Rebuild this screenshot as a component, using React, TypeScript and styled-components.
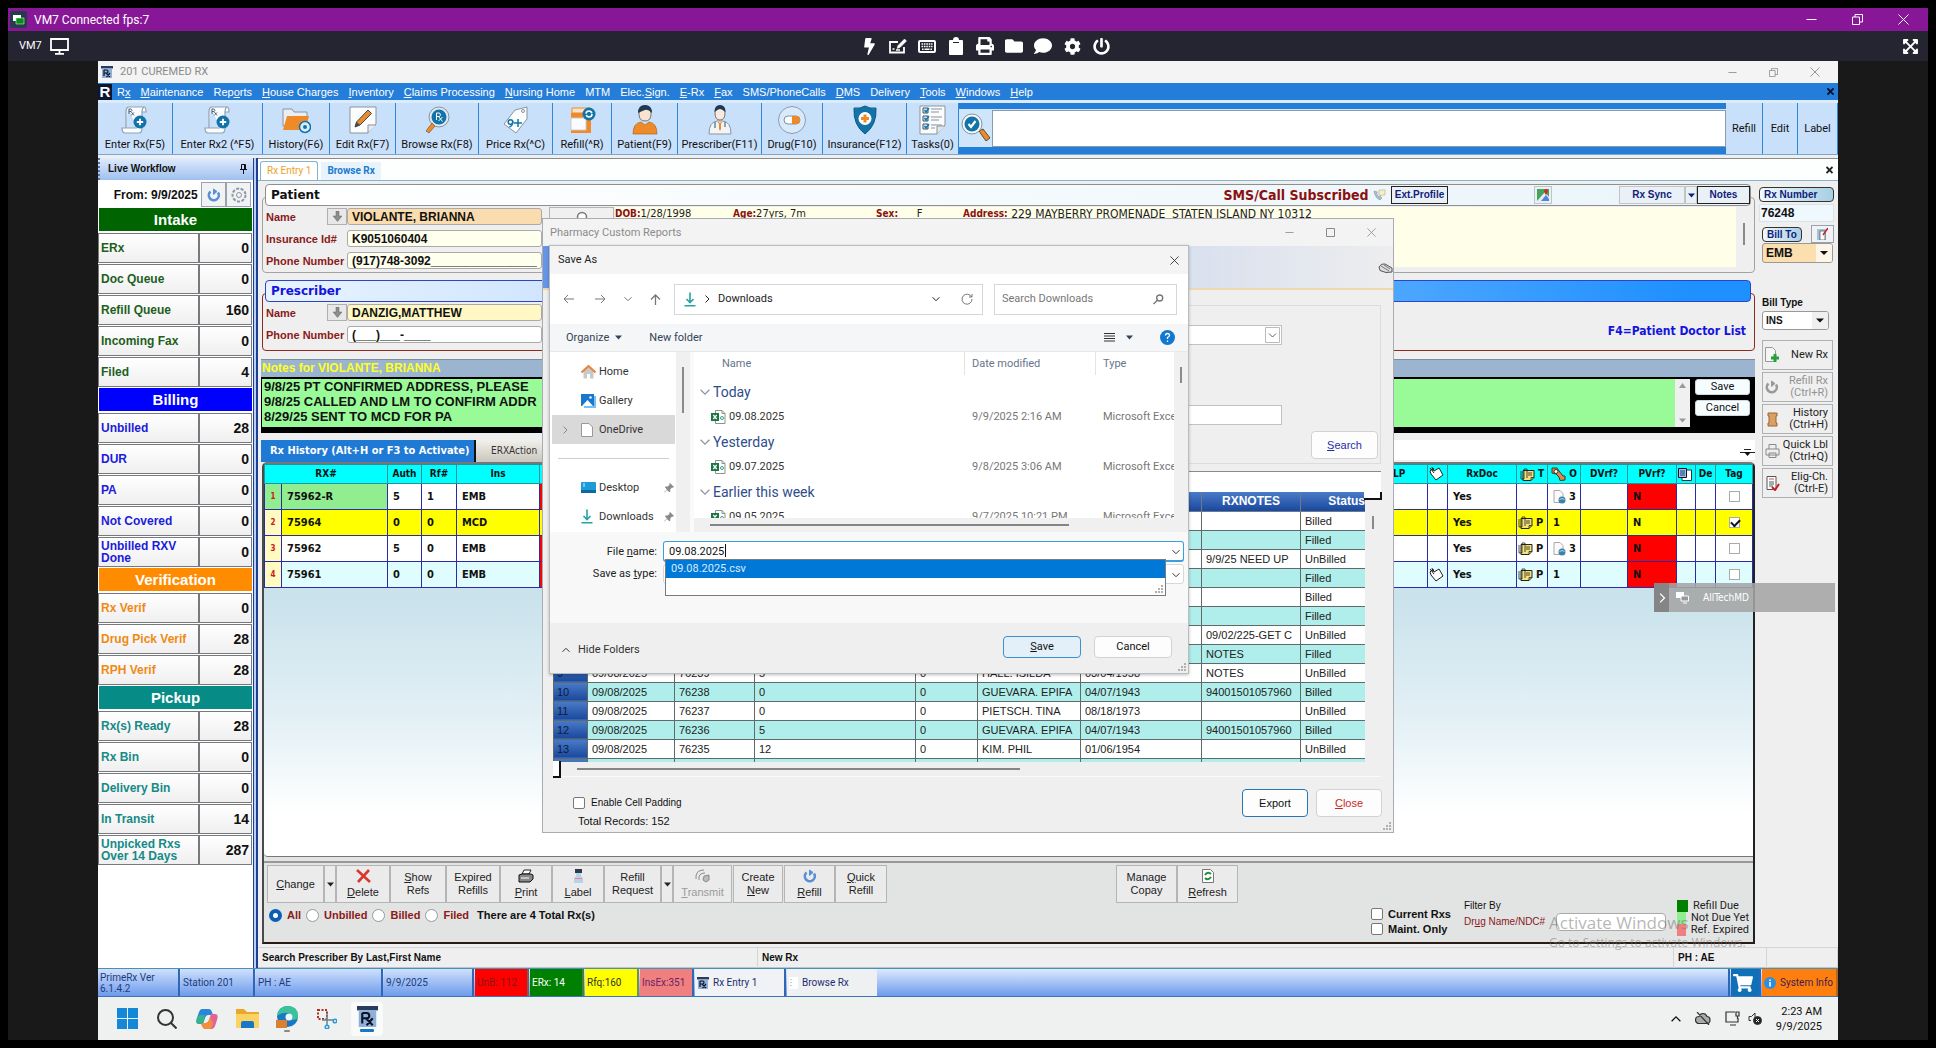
import React from "react";
import styled, { createGlobalStyle, css } from "styled-components";
import {
  FaBolt, FaPrint, FaFolder, FaComment, FaCog, FaPowerOff,
  FaExpandArrowsAlt, FaShoppingCart,
} from "react-icons/fa";

const ARIAL = '"Liberation Sans", Arial, sans-serif';
const UI = 'Roboto, "Segoe UI", sans-serif';
const TAHOMA = '"DejaVu Sans Condensed", "DejaVu Sans", Tahoma, sans-serif';
const VERDANA = '"DejaVu Sans", Verdana, sans-serif';

const Global = createGlobalStyle`
  * { box-sizing: border-box; }
  body { margin: 0; background: #000; font: 11px/14px ${ARIAL}; color: #111; }
  button, input, select, textarea { font: inherit; color: inherit; margin: 0; padding: 0; border-radius: 0; }
  svg { display: block; flex: none; }
  u { text-underline-offset: 1px; }
`;

/* "&" marks the access key of a label */
function Mn({ t }: { t: string }) {
  const i = t.indexOf("&");
  if (i < 0) return <>{t}</>;
  return <span>{t.slice(0, i)}<u>{t[i + 1]}</u>{t.slice(i + 2)}</span>;
}

/* ---------- viewer frame ---------- */
const Viewer = styled.div`min-height: 100vh; padding: 8px; display: flex; flex-direction: column; background: #000;`;
const ViewerTitle = styled.header`
  height: 23px; background: #871796; color: #fff; display: flex; align-items: center; gap: 7px; padding: 0 19px 0 2px;
  font: 12px/16px ${UI};
`;
const Spacer = styled.span`flex: 1;`;
const WinButtons = styled.div<{ $gap: number }>`display: flex; align-items: center; gap: ${p => p.$gap}px;`;
const IconBtn = styled.button`background: none; border: 0; display: flex; align-items: center; justify-content: center;`;
const ViewerBar = styled.div`
  height: 30px; background: #252532; color: #fff; display: grid; grid-template-columns: 1fr auto 1fr;
  align-items: center; padding: 0 9px 0 11px; font: 11px/14px ${UI};
`;
const BarSide = styled.div<{ $end?: boolean }>`display: flex; align-items: center; gap: 8px; justify-content: ${p => (p.$end ? "flex-end" : "flex-start")};`;
const BarTools = styled.div`display: flex; align-items: center; gap: 11px; padding-left: 32px; button { width: 18px; }`;
const Stage = styled.div`flex: 1; display: flex; padding: 0 90px; background: #191919;`;

/* ---------- desktop and application ---------- */
const Desktop = styled.div`position: relative; flex: 1; min-width: 0; display: flex; flex-direction: column; background: #efefef;`;
const AppTitle = styled.div`
  height: 22px; display: flex; align-items: center; gap: 7px; padding: 0 18px 0 3px; background: #f3f4f3; color: #8b8b8b;
  font: 11px/14px ${UI};
`;
const MenuBar = styled.nav`
  height: 20px; display: flex; align-items: center; gap: 10px; padding-right: 4px; background: #247dd8; color: #fff;
  border-bottom: 3px solid #dcebf8;
  a { color: inherit; text-decoration: none; }
  button { color: #06122a; }
`;
const Logo = styled.span`width: 14px; height: 16px; margin-right: -5px; background: #0b1633; color: #fff; font: bold 15px/16px ${ARIAL}; text-align: center;`;
const ToolBar = styled.div`height: 52px; display: flex; background: #247dd8; border-bottom: 1px solid #7aa7d0;`;
const BigTool = styled.button<{ $w: number }>`
  width: ${p => p.$w}px; border: 0; border-right: 1px solid #2f86dd; background: #c9e0fb; display: flex; flex-direction: column;
  align-items: center; justify-content: center; gap: 3px; font: 11px/14px ${UI}; white-space: nowrap; color: #111;
`;
const Finder = styled.div`
  flex: 1; display: flex; margin: 6px 0 7px; background: #cfe6fa; align-items: center; padding-left: 2px; gap: 1px;
  input { flex: 1; min-width: 0; height: 37px; border: 1px solid #8d9aa8; background: #fff; }
`;
const Work = styled.div`flex: 1; display: flex; margin-top: 3px; background: #fff;`;

/* ---------- workflow panel ---------- */
const Flow = styled.aside`width: 155px; background: #fff; font-weight: bold;`;
const FlowHead = styled.div`
  height: 22px; display: flex; align-items: center; justify-content: space-between; padding: 0 6px 0 8px;
  background: linear-gradient(#e0ebfc, #9fc0ef); font-size: 10px; border-left: 2px dotted #56719e;
`;
const FromRow = styled.div`height: 28px; display: flex; align-items: center; justify-content: flex-end; font-size: 12px; padding: 2px 2px 1px 0;`;
const SmallTool = styled.button`
  width: 25px; height: 25px; border: 1px solid #9aa3ad; background: #f0f2f4; display: flex; align-items: center; justify-content: center;
`;
const FlowTitle = styled.h2<{ $c: string }>`
  margin: 0 1px 2px; height: 23px; background: ${p => p.$c}; color: #fff; font: bold 15px/23px ${ARIAL}; text-align: center;
`;
const FlowList = styled.div`display: grid; gap: 1px; margin-bottom: 1px; padding-right: 1px;`;
const FlowRow = styled.button<{ $c: string }>`
  display: grid; grid-template-columns: 99px 1fr; height: 30px; border: 1px solid #77797c; background: linear-gradient(#fff, #efefef);
  align-items: center; font: bold 12px/12px ${ARIAL}; text-align: left; color: ${p => p.$c};
  span { padding-left: 2px; }
  b { height: 28px; border-left: 2px solid #77797c; color: #111; font-size: 14px; line-height: 28px; text-align: right; padding-right: 2px; }
`;
const Splitter = styled.div`width: 5px; background: #b9d0f4; border-left: 1px solid #1c3f94; border-right: 2px solid #1c3f94;`;

/* ---------- main document ---------- */
const Doc = styled.main`flex: 1; min-width: 0; display: flex; flex-direction: column; background: #efefef;`;
const DocTabs = styled.div`
  height: 23px; display: flex; align-items: flex-end; gap: 3px; padding: 0 5px 0 2px; background: #fdfefe;
  border-top: 1px solid #8a8a8a; border-bottom: 1px solid #86b3cc;
`;
const DocTab = styled.button<{ $on?: boolean }>`
  height: 18px; font: 10px/16px ${UI}; padding: 0 6px; border: 0; background: #e8f3fc; color: #1b7bd0; font-weight: bold;
  ${p => p.$on && css`height: 19px; background: #fff; border: 1px solid #86b3cc; border-bottom: 0; border-radius: 3px 3px 0 0; color: #f0a02a; font-weight: normal;`}
`;
const DocBody = styled.div`flex: 1; display: flex;`;
const Center = styled.div`flex: 1; min-width: 0; display: flex; flex-direction: column; padding: 3px 1px 3px 3px;`;
const GroupHead = styled.div<{ $blue?: boolean }>`
  position: relative; height: 22px; margin: 0 4px; display: flex; align-items: center; padding-left: 5px;
  border: 1px solid ${p => (p.$blue ? "#2a45c8" : "#8f8f8f")}; border-radius: 4px;
  background: ${p => (p.$blue ? "linear-gradient(90deg, #e8f3ff, #cfe5fe 20%, #1e90ff 96%)" : "linear-gradient(90deg, #fff, #eaf4fa)")};
  h2 { margin: 0; font: bold 12px/20px ${VERDANA}; color: ${p => (p.$blue ? "#1414dc" : "#111")}; }
`;
const GroupBody = styled.div<{ $red?: boolean }>`
  margin: -9px 0 7px 1px; padding: 9px 18px 0 3px; display: flex; height: ${p => (p.$red ? 58 : 76)}px;
  border: 1px solid ${p => (p.$red ? "#8a2b22" : "#a3a3a3")}; border-radius: 4px;
`;
const Alert = styled.span`font: bold 14px/18px ${TAHOMA}; color: #8b1010;`;
const HeadBtn = styled.button<{ $w: number; $ml?: number; $dark?: boolean }>`
  width: ${p => p.$w}px; margin-left: ${p => p.$ml || 0}px; height: 18px; border: 1px solid ${p => (p.$dark ? "#222" : "#c4c4c4")};
  background: #e9f0f6; color: #11207a; font: bold 10px/14px ${ARIAL}; display: flex; align-items: center; justify-content: center;
`;
const Fields = styled.div`display: grid; grid-template-columns: 61px 20px 195px; grid-auto-rows: 17px; row-gap: 5px; padding-top: 1px; align-content: start; align-items: center;
  label { grid-column: 1 / 3; color: #8b1a1a; font-weight: bold; white-space: nowrap; }
  label.short { grid-column: 1; }
`;
const Drop = styled.button`width: 20px; height: 17px; border: 1px solid #b0b0b0; background: #e8e8e8; display: flex; align-items: center; justify-content: center;`;
const Field = styled.input<{ $bg: string }>`
  height: 17px; width: 100%; min-width: 0; padding: 0 4px; border: 1px solid #aaa; border-radius: 3px; background: ${p => p.$bg}; font: bold 12px/15px ${ARIAL};
`;
const LookBtn = styled.button`width: 65px; height: 24px; margin: 0 1px 0 7px; border: 1px solid #b5b5b5; background: #f0f0f0; display: flex; justify-content: center; padding-top: 3px;`;
const Info = styled.div`
  flex: 1; height: 60px; background: #ffffe9; font: 11px/14px ${TAHOMA}; color: #222;
  dl { margin: 0; display: grid; grid-template-columns: 118px 143px 87px auto; white-space: pre; }
  dl div { display: flex; }
  dl div:last-child dd { font-size: 12px; }
  dt { font-weight: bold; font-size: 10px; color: #8b1010; } dd { margin: 0; }
`;
const InfoScroll = styled.div`width: 15px; margin-right: -15px; padding: 16px 0 0 7px;`;
const Thumb = styled.i<{ $h: number }>`display: block; width: 2px; height: ${p => p.$h}px; background: #8a8a8a; flex: none;`;
const F4 = styled.div`flex: 1; text-align: right; align-self: center; margin: 8px -10px 0 0; font: bold 12px/16px ${TAHOMA}; color: #1414dc;`;

const NotesBar = styled.div`height: 18px; margin-top: 1px; background: #9bb5d1; border-top: 1px solid #7d8c9b; color: #ffff1e; font: bold 12px/16px ${ARIAL}; padding-left: 1px;`;
const NotesBox = styled.div`height: 56px; background: #000; padding: 2px 5px 6px 1px; display: flex;
  textarea { flex: 1; min-width: 0; border: 0; resize: none; overflow: hidden; background: #98fb98; padding: 0 2px; font: bold 13px/15px ${ARIAL}; color: #111; }
`;
const NotesScroll = styled.div`width: 15px; background: #f0f0f0; display: flex; flex-direction: column; justify-content: space-between; align-items: center; padding: 4px 0;`;
const NotesButtons = styled.div`display: grid; gap: 5px; align-content: start; padding-left: 5px;
  button { width: 55px; height: 16px; border: 1px solid #cfd8dc; border-radius: 3px; background: #f6fdff; font: 11px/14px ${UI}; }
`;
const GridTabs = styled.div`height: 22px; margin-top: 7px; display: flex; background: linear-gradient(#fff 90%, #efefef 90%); align-items: stretch;`;
const GridTab = styled.button<{ $on?: boolean }>`
  border: 0; text-align: left; white-space: nowrap; padding: 0 0 0 15px; width: 90px; background: linear-gradient(#f2f0ea, #c9c6bf); font: 10px/20px ${TAHOMA}; color: #333;
  ${p => p.$on && css`width: 215px; padding: 0 0 0 9px; background: #1f7ad6; color: #fff; font: bold 11px/20px ${TAHOMA}; border-right: 2px solid #111;`}
`;
const GridBox = styled.div`
  flex: 1; display: flex; flex-direction: column; margin-left: 1px; border: 2px solid #4a4a4a; border-top-color: #777; border-radius: 5px 5px 0 0;
  background: #e2e3e3; border-right-color: #222; border-bottom-color: #2a1c16;
`;
const GridArea = styled.div`flex: 1; background: linear-gradient(#c9e2ec 130px, #e4f1f6 260px, #fff 350px); border-bottom: 1px solid #777; border-radius: 0 0 0 4px;`;
const RxTable = styled.table`
  width: 100%; table-layout: fixed; border-collapse: collapse; font: bold 11px/14px ${TAHOMA};
  th { height: 19px; padding: 0; background: #00ffff; border: 1px solid #2d8f98; font-size: 10px; overflow: hidden; white-space: nowrap; }
  td { height: 26px; padding: 0 0 0 5px; border: 1px solid #2b2ba8; overflow: hidden; white-space: nowrap; }
  th svg, td svg { display: inline-block; vertical-align: middle; margin-right: 3px; }
  th.lp { text-align: left; padding-left: 7px; }
  td.ico { padding-left: 1px; }
  td.tag { text-align: center; padding: 0; }
  input { appearance: none; width: 11px; height: 11px; border: 1px solid #aaa; background: #fff; vertical-align: middle; }
  input:checked::before { content: ""; display: block; width: 7px; height: 4px; margin: 1px; border: solid #111; border-width: 0 0 2px 2px; transform: rotate(-45deg); }
`;
const RxRow = styled.tr<{ $bg: string; $no: string; $rx?: string; $flag: string }>`
  background: ${p => p.$bg};
  td.no { background: ${p => p.$no}; color: #d01818; font-size: 8px; text-align: center; padding: 0; }
  td.rx { background: ${p => p.$rx || "transparent"}; }
  td.mid { background: ${p => p.$flag}; }
  td.pv { background: ${p => p.$flag}; }
`;
const Actions = styled.div`display: flex; margin-top: 4px; padding: 2px 3px 0 3px; border-top: 2px solid #999;`;
const Act = styled.button<{ $w: number; $ml?: number; $off?: boolean }>`
  width: ${p => p.$w}px; margin-left: ${p => p.$ml || 0}px; height: 38px; border: 1px solid #b5b5b5; background: #ebebeb; color: ${p => (p.$off ? "#9a9a9a" : "#222")};
  display: flex; flex-direction: column; align-items: center; justify-content: center; gap: 3px; font: 11px/13px ${ARIAL}; white-space: pre-line;
`;
const Filters = styled.div`height: 39px; display: flex; align-items: flex-start; padding: 0 4px 0 5px;`;
const Radios = styled.div`display: flex; gap: 5px; align-items: center; height: 24px; font-weight: bold; color: #8b1a1a; white-space: nowrap;
  label { display: flex; align-items: center; gap: 5px; }
  input { appearance: none; width: 13px; height: 13px; border: 1px solid #999; border-radius: 50%; background: #fff; }
  input:checked { border: 4px solid #0a5fb4; }
  strong { color: #111; padding-left: 3px; }
`;
const Checks = styled.div`display: grid; gap: 2px; padding-top: 4px; font-weight: bold; white-space: nowrap;
  label { display: flex; align-items: center; gap: 5px; height: 13px; }
`;
const Tick = styled.input`appearance: none; width: 12px; height: 12px; border: 1px solid #777; border-radius: 2px; background: #fff; flex: none;`;
const DrugFilter = styled.div`width: 202px; margin: -4px 11px 0 13px; font: 10px/14px ${ARIAL}; white-space: nowrap;
  div { display: flex; align-items: center; gap: 11px; color: #8b1a1a; }
  input { width: 110px; height: 18px; border: 1px solid #aaa; border-radius: 4px; background: #fff; }
`;
const Legend = styled.div`margin-top: -3px; font: 11px/12px ${UI}; color: #222; white-space: nowrap; width: 72px;
  div { display: flex; gap: 5px; }
  i { width: 11px; height: 12px; }
`;
const HintBar = styled.div`
  height: 21px; display: grid; grid-template-columns: 500px 1fr 93px 71px; border-top: 1px solid #d5d5d5; border-bottom: 1px solid #b9c6cc; font: bold 10px/20px ${ARIAL};
  span { padding-left: 4px; border-right: 1px solid #d5d5d5; white-space: nowrap; }
`;

/* ---------- right rail ---------- */
const Rail = styled.aside`width: 82px; padding: 6px 4px 0 3px; display: flex; flex-direction: column;
  > label, > span { font-weight: bold; font-size: 10px; }
`;
const Pill = styled.label`height: 15px; padding: 0 4px; border: 1px solid #333; border-radius: 4px; background: linear-gradient(90deg, #f2fafd, #a6cfe3); color: #11207a; font: bold 10px/13px ${ARIAL}; white-space: nowrap;`;
const RxNumber = styled.input`height: 18px; width: 100%; margin: 2px 0 3px; padding-left: 1px; border: 1px solid #dbe3e8; background: #eff8fc; font: bold 12px/16px ${ARIAL};`;
const BillRow = styled.div`display: flex; align-items: center; justify-content: space-between; padding-left: 3px; button { width: 23px; height: 18px; }`;
const SelectBox = styled.span<{ $bg: string; $h: number; $small?: boolean }>`
  position: relative; display: block; height: ${p => p.$h}px; background: ${p => p.$bg}; border: 1px solid #999; border-radius: 3px; overflow: hidden;
  margin: 0 ${p => (p.$small ? 5 : 1)}px 0 3px;
  select { appearance: none; width: 100%; height: 100%; border: 0; background: transparent; font: bold ${p => (p.$small ? 10 : 12)}px/16px ${ARIAL}; padding-left: 3px; }
  svg { position: absolute; right: 0; top: 0; pointer-events: none; }
`;
const BillType = styled.label`margin: 33px 0 1px 3px;`;
const RailBtn = styled.button<{ $off?: boolean }>`
  height: 30px; margin-bottom: 2px; border: 1px solid #adb1b4; background: #efefef; display: flex; align-items: center; justify-content: space-between;
  padding: 0 4px 0 2px; font: 11px/12px ${UI}; color: ${p => (p.$off ? "#929292" : "#222")}; text-align: right; white-space: pre-line;
`;
const RailButtons = styled.div`display: grid; margin: 10px 1px 0 3px; gap: 0;`;

/* ---------- bottom bars ---------- */
const StatusBar = styled.div`height: 29px; display: flex; gap: 1px; background: linear-gradient(#dceafd, #6d9bed); border-top: 1px solid #4a8fb5; border-bottom: 1px solid #3c74b8;`;
const Seg = styled.button<{ $w?: number; $bg?: string; $c?: string; $edge?: string }>`
  ${p => (p.$w ? `width: ${p.$w}px;` : "flex: 1;")} border: 0; border-right: 2px solid ${p => p.$edge || "#2f66b5"}; text-align: left; padding: 0 2px; display: flex; align-items: center; gap: 4px;
  background: ${p => p.$bg || "linear-gradient(#cfe0fb, #6d9bed)"}; color: ${p => p.$c || "#1d3c80"}; font: 10px/11px ${UI}; white-space: pre;
`;
const TaskBar = styled.div`height: 43px; display: flex; align-items: center; gap: 8px; padding: 0 16px 0 13px; background: #eff0f0;`;
const TaskIcon = styled.button<{ $on?: boolean }>`
  width: 32px; height: 34px; border: 0; border-radius: 4px; background: ${p => (p.$on ? "#f9fafa" : "none")}; display: flex; flex-direction: column; align-items: center; justify-content: center; gap: 2px;
`;
const Tray = styled.div`display: flex; align-items: center; gap: 14px; font: 11px/15px ${UI}; text-align: right; white-space: pre-line;
  > div { display: flex; align-items: center; gap: 8px; }
`;
const Watermark = styled.div`
  position: absolute; right: 72px; bottom: 89px; width: 217px; color: rgba(120, 120, 120, 0.55); font: 12px/16px "Open Sans", sans-serif; white-space: nowrap; pointer-events: none;
  strong { display: block; font: 17px/24px "Open Sans", sans-serif; }
`;
const SideTab = styled.div`
  position: absolute; right: 3px; top: 522px; width: 181px; height: 29px; display: flex; align-items: center; background: rgba(165, 165, 165, 0.88);
  color: #fff; font: 10px/14px ${TAHOMA};
  button { width: 15px; height: 29px; border: 0; background: #858585; margin-right: 7px; display: flex; align-items: center; justify-content: center; }
  span { margin-left: 14px; }
`;

/* ---------- reports window ---------- */
const Reports = styled.section`
  position: absolute; left: 444px; top: 157px; width: 852px; height: 615px; background: #efefef; border: 1px solid #a9adb3; display: flex; flex-direction: column;
`;
const WinTitle = styled.div`height: 27px; flex: none; display: flex; align-items: center; padding: 0 17px 0 7px; background: #f3f3f4; color: #8b8b8b; font: 11px/14px ${UI};`;
const Banner = styled.div`height: 44px; flex: none; border-bottom: 2px solid #ecd9ae; background: linear-gradient(90deg, #6495e8, #cdd9ef 62%, #ededee); display: flex; align-items: center; justify-content: flex-end;`;
const Criteria = styled.div`
  height: 159px; flex: none; margin: 15px 12px 7px 11px; border: 1px solid #dcdcdc; padding: 19px 2px 4px 0; display: flex; flex-direction: column; align-items: flex-start;
  > input { width: 727px; height: 20px; margin-top: 60px; border: 1px solid #c2c2c2; background: #fff; }
  > button { margin: auto 0 0; align-self: flex-end; }
`;
const ComboBox = styled.span`width: 727px; position: relative; display: block;
  select { appearance: none; width: 100%; height: 20px; border: 1px solid #c2c2c2; background: #fff; display: block; }
  svg { position: absolute; right: 2px; top: 2px; pointer-events: none; }
`;
const Rounded = styled.button<{ $w: number; $h: number; $c?: string; $edge?: string; $bg?: string }>`
  width: ${p => p.$w}px; height: ${p => p.$h}px; border: 1px solid ${p => p.$edge || "#d2d2d2"}; border-radius: 4px; background: ${p => p.$bg || "#fdfdfd"}; color: ${p => p.$c || "#111"};
`;
const Sheet = styled.div`margin: 0 12px 0 10px; border-top: 1px solid #8a8a8a; background: #fff; padding-top: 20px; height: 291px; flex: none; display: flex;`;
const SheetView = styled.div`flex: 1; min-width: 0; overflow: hidden; border-bottom: 0;`;
const SheetScroll = styled.div`width: 16px; background: #efefef; display: flex; flex-direction: column; align-items: center;
  &::before { content: ""; width: 16px; height: 6px; background: #fff; border: solid #111; border-width: 0 2px 2px 0; margin-bottom: 16px; }
`;
const SheetTable = styled.table`
  width: 812px; table-layout: fixed; border-collapse: collapse; font: 11px/16px ${ARIAL}; color: #222;
  th { height: 19px; padding: 0; background: linear-gradient(#4a7bc8, #1a489c); color: #fff; font: bold 12px/16px ${ARIAL}; border: 1px solid #6e7a8a; border-top: 0; }
  th:last-child { text-align: right; }
  tr { height: 19px; }
  td { padding: 0 0 0 4px; border: 1px solid #5f6a6a; white-space: nowrap; }
  td:first-child { background: linear-gradient(#4a7bc8, #1a489c); color: #0c1c44; padding-left: 3px; }
  tbody tr:nth-child(even) { background: #afeeea; }
`;
const HScroll = styled.div`height: 15px; flex: none; margin: 0 12px 0 10px; display: flex; align-items: center; border-bottom: 1px solid #fafafa;
  &::before { content: ""; width: 6px; height: 15px; background: #fff; border: solid #111; border-width: 0 2px 2px 0; margin-right: 16px; }
`;
const Bar = styled.i<{ $w: number }>`width: ${p => p.$w}px; height: 2px; background: #858585;`;
const RepFoot = styled.div`flex: 1; display: flex; padding: 12px 11px 0 30px; gap: 8px;
  > div { flex: 1; font: 11px/19px ${ARIAL}; padding-top: 4px; }
  label { display: flex; align-items: center; gap: 6px; font-size: 10px; }
  p { margin: 0 0 0 5px; }
`;
const Grip = styled.svg`position: absolute; right: 1px; bottom: 1px;`;

/* ---------- save dialog ---------- */
const SaveDlg = styled.section`
  position: absolute; left: 6px; top: 26px; width: 640px; height: 429px; background: #fff; border: 1px solid #b9bcc0; box-shadow: 0 1px 3px rgba(0, 0, 0, 0.25);
  display: flex; flex-direction: column; font: 11px/14px ${UI}; color: #333;
`;
const DlgTitle = styled.div`height: 28px; flex: none; display: flex; align-items: center; padding: 0 9px 0 8px; background: #f4f4f5; color: #222;`;
const NavRow = styled.div`height: 50px; flex: none; display: flex; align-items: center; padding: 0 11px 0 12px; color: #777;`;
const NavIcons = styled.div`width: 112px; display: grid; grid-template-columns: 32px 29px 26px 20px; align-items: center; justify-items: start; padding-left: 1px;`;
const Address = styled.div`flex: 1; height: 31px; display: flex; align-items: center; border: 1px solid #d3d6da; padding: 0 9px; gap: 7px; color: #222;`;
const Reload = styled.svg`margin-left: 14px; color: #777;`;
const SearchBox = styled.label`width: 183px; height: 31px; margin-left: 11px; display: flex; align-items: center; border: 1px solid #d3d6da; padding: 0 12px 0 7px;
  input { flex: 1; min-width: 0; border: 0; outline: 0; background: none; } input::placeholder { color: #777; opacity: 1; }
`;
const DlgTools = styled.div`height: 28px; flex: none; display: flex; align-items: center; padding: 0 13px 0 16px; background: #f5f6f7; color: #34435a; border-bottom: 1px solid #e7e9eb; gap: 27px;
  button { border: 0; background: none; display: flex; align-items: center; gap: 6px; }
  button:nth-of-type(3) { gap: 11px; }
`;
const DlgBody = styled.div`height: 180px; flex: none; display: flex; overflow: hidden;`;
const Places = styled.div`width: 126px; padding: 5px 1px 0 2px;
  hr { margin: 14px 6px; border: 0; border-top: 1px solid #cfcfcf; }
`;
const Place = styled.button<{ $on?: boolean }>`
  width: 100%; height: 29px; border: 0; background: ${p => (p.$on ? "#d9d9d9" : "none")}; display: grid; grid-template-columns: 26px 15px 1fr auto; align-items: center; text-align: left; column-gap: 3px; padding: 0 1px 0 0;
  svg:first-child { justify-self: center; color: #888; }
`;
const VScroll = styled.div`width: 14px; flex: none; background: #f0f0f0; display: flex; justify-content: center; padding-top: 15px;`;
const FileArea = styled.div`flex: 1; min-width: 0; display: flex; flex-direction: column; border-left: 4px solid #fafafa;`;
const FileView = styled.div`height: 166px; display: flex; overflow: hidden;`;
const FileTable = styled.table`
  flex: 1; width: 479px; border-collapse: collapse; table-layout: fixed; align-self: flex-start; color: #777;
  th { height: 27px; padding: 0 0 3px 7px; text-align: left; font-weight: normal; color: #66758c; background: linear-gradient(#e4e4e4, #e4e4e4) right top / 1px 23px no-repeat; }
  th:first-child { padding-left: 28px; } th:last-child { background: none; }
  td { height: 25px; padding: 0 0 0 7px; white-space: nowrap; }
  td:first-child { padding-left: 17px; color: #333; }
  td span { display: flex; align-items: center; gap: 3px; }
  td.group { height: 25px; padding: 0 0 0 6px; font-size: 14px; color: #2f4d8c; }
  td.group svg { color: #8a96a8; }
`;
const FileHScroll = styled.div`flex: 1; background: #f0f0f0; display: flex; align-items: center; padding-left: 16px;`;
const DlgForm = styled.div`height: 91px; flex: none; background: #f8f8f8; padding: 9px 4px 0 0; display: grid; grid-template-columns: 107px 1fr; column-gap: 6px; grid-template-rows: 21px 20px; row-gap: 2px; align-items: center; align-content: start;
  > label { text-align: right; color: #222; white-space: nowrap; }
`;
const NameWrap = styled.div`position: relative; height: 21px;
  > input { width: 100%; height: 21px; border: 1px solid #3b9fdc; border-bottom-width: 2px; border-radius: 3px; background: #fff; padding-left: 5px; color: #111; display: block; }
  > svg { position: absolute; right: 4px; top: 7px; }
`;
const TextCaret = styled.i`position: absolute; left: 62px; top: 3px; width: 1px; height: 13px; background: #111;`;
const Suggest = styled.div`position: absolute; z-index: 2; left: 2px; top: 18px; right: 18px; height: 37px; background: #fff; border: 1px solid #7a7a7a;
  div { height: 18px; background: #0078d7; color: #d8ecff; padding-left: 5px; line-height: 18px; }
`;
const TypeSelect = styled.div`position: relative; height: 20px;
  select { appearance: none; width: 100%; height: 20px; border: 1px solid #d8d8d8; border-radius: 3px; background: #fff; display: block; color: transparent; }
  svg { position: absolute; right: 4px; top: 7px; pointer-events: none; }
`;
const DlgFoot = styled.div`flex: 1; background: #efefef; display: flex; align-items: flex-start; padding: 13px 16px 0 12px; gap: 13px;
  > button:first-child { border: 0; background: none; display: flex; align-items: center; gap: 8px; height: 27px; margin-right: auto; }
`;

/* ---------- small drawings ---------- */
const line = { fill: "none", stroke: "currentColor", strokeWidth: 1 } as const;
const Min = ({ s = 11 }) => <svg width={s} height={s} viewBox="0 0 11 11" {...line}><path d="M.5 5.5h10" /></svg>;
const Restore = ({ s = 11 }) => <svg width={s} height={s} viewBox="0 0 11 11" {...line}><path d="M.5 3h7v7.500h-7zM3 3V.5h7.500V8H7.500" /></svg>;
const Square = () => <svg width="9" height="9" viewBox="0 0 9 9" {...line}><path d="M.5.5h8v8h-8z" /></svg>;
const Cross = ({ s = 11, w = 1 }) => <svg width={s} height={s} viewBox="0 0 11 11" {...line} strokeWidth={w}><path d="M.5.5l10 10M10.500.5l-10 10" /></svg>;
const Chev = ({ d = "down", s = 8 }: { d?: "down" | "up" | "right"; s?: number }) => (
  <svg width={s} height={s} viewBox="0 0 8 8" {...line}>
    <path d={d === "down" ? "M.5 2.200l3.500 3.500 3.500-3.500" : d === "up" ? "M.5 5.800l3.500-3.500 3.500 3.500" : "M2.500.5L6 4 2.500 7.500"} />
  </svg>
);
const Caret = ({ up = false, c = "#222" }) => <svg width="7" height="5" viewBox="0 0 7 5"><path d={up ? "M0 5h7L3.500 0z" : "M0 .5h7L3.500 4.500z"} fill={c} /></svg>;
const CaretBlock = ({ h, bg }: { h: number; bg: string }) => (
  <svg width="16" height={h} viewBox={`0 0 16 ${h}`}><rect width="16" height={h} fill={bg} /><path d={`M4 ${h / 2 - 2}h8l-4 4z`} fill="#111" /></svg>
);
const GripDots = () => (
  <Grip width="9" height="9" viewBox="0 0 9 9" fill="#b0b0b0"><path d="M6 0h2v2H6zM3 3h2v2H3zM6 3h2v2H6zM0 6h2v2H0zM3 6h2v2H3zM6 6h2v2H6z" /></Grip>
);
const DownIco = () => <svg width="12" height="15" viewBox="0 0 12 15" fill="none" stroke="#24a3a0" strokeWidth="1.600"><path d="M6 .5v10M2.500 7L6 10.500 9.500 7M.5 13.800h11" /></svg>;
const Pin = () => <svg width="10" height="10" viewBox="0 0 10 10" fill="#8a8a8a"><path d="M6 0l4 4-1 .8-1-.2-1.800 2 .1 1.900-.9.8L3 6.900.4 9.600 0 9.200 2.900 6.400.9 4.300l.8-.9 1.900.1 2-1.800L5.300.8z" /></svg>;
const Excel = () => (
  <svg width="15" height="14" viewBox="0 0 15 14"><path d="M4.500.5h6.500l3 3v10h-9.500z" fill="#fff" stroke="#8a948e" /><path d="M11 .5v3h3" fill="none" stroke="#8a948e" /><rect y="3" width="8" height="8" fill="#1d7544" /><path d="M2.300 5l3.400 4M5.700 5L2.300 9" stroke="#fff" strokeWidth="1.200" /><circle cx="11" cy="8" r="1.500" fill="none" stroke="#3c9a93" /></svg>
);
const Swirl = ({ c = "#5a8fd8", s = 14 }) => (
  <svg width={s} height={s} viewBox="0 0 14 14" fill="none" stroke={c} strokeWidth="2.600"><path d="M3.500 3.500A5 5 0 1 0 11 4.500" /><path d="M6.500 1l0 5.500L10 3.500z" fill={c} stroke={c} strokeWidth="1" /></svg>
);
const GearIco = () => <svg width="16" height="16" viewBox="0 0 16 16" fill="none" stroke="#8b98a4"><circle cx="8" cy="8" r="6.500" strokeDasharray="3 1.500" strokeWidth="2" /><circle cx="8" cy="8" r="2.500" /></svg>;
const ArrowDown = () => <svg width="9" height="11" viewBox="0 0 9 11"><path d="M3 0h3v5h3L4.500 10.500 0 5h3z" fill="#8c8c8c" stroke="#666" strokeWidth=".5" /></svg>;
const NoteIco = () => <svg width="15" height="14" viewBox="0 0 15 14"><path d="M1 4l3-3 1 3 5-3 4 7-7 5-5-6z" fill="#fff" stroke="#222" /><path d="M1 1l4 5M3 0l1 4" stroke="#222" /></svg>;
const ClipIco = () => <svg width="15" height="13" viewBox="0 0 15 13"><path d="M3 2.500h11v7l-3 3H3z" fill="#f3e27a" stroke="#222" /><path d="M1 3v8h3V1h3v9M11 12.500v-3h3M8 5h4M8 7h4" fill="none" stroke="#222" strokeWidth=".8" /></svg>;
const ClipPhone = () => <svg width="15" height="14" viewBox="0 0 15 14"><path d="M1 1l5 0 2 3 4 5 2 0 0 4-5 .5L8 10 5 7 1 6z" fill="#d98a4a" stroke="#432" /><circle cx="5" cy="4.500" r="2" fill="#fff" stroke="#432" /></svg>;
const DocGlobe = () => <svg width="13" height="14" viewBox="0 0 13 14"><path d="M1 .5h6l3 3v9H1z" fill="#fafafa" stroke="#aaa" /><circle cx="9" cy="10" r="3.500" fill="#3d82a8" /><path d="M6.500 9.500q2.500-2 5 0" stroke="#a9dcf0" fill="none" /></svg>;
const PcIco = () => <svg width="14" height="13" viewBox="0 0 14 13"><path d="M4 2h9.500v10.500H4z" fill="#fff" stroke="#333" /><path d="M.5.5h8v9h-8z" fill="#9cc0ea" stroke="#112" /><path d="M2 3h5M2 5h5M2 7h5" stroke="#223a80" /></svg>;
const Monitor = () => <svg width="19" height="17" viewBox="0 0 19 17" fill="none" stroke="#fff" strokeWidth="1.800"><path d="M1 1h17v11H1zM5 15.800h9M9.500 12v3" /></svg>;
const RxLogo = ({ s = 12 }) => (
  <svg width={s} height={s} viewBox="0 0 12 12"><path d="M0 0h12v2.500H0z" fill="#2a3c5e" /><path d="M1 2.500h10V12H1z" fill="#8fb0d8" /><path d="M3 4v6M3 4h2.500a1.300 1.300 0 0 1 0 3H3M5 7l4 4M9 7l-3.500 4" stroke="#0b1428" strokeWidth="1.200" fill="none" /></svg>
);
const HeadsetNote = () => <svg width="13" height="12" viewBox="0 0 13 12"><path d="M1 2q1 7 6 9l2-2-2-2-1 1Q4 6 3.500 4l1-1z" fill="#a9bfd4" stroke="#7f95ab" strokeWidth=".6" /><path d="M6 1h6v5H9L7.500 7.500V6H6z" fill="#f6f0c9" stroke="#b5ab7c" strokeWidth=".6" /></svg>;
const MapIco = () => <svg width="12" height="12" viewBox="0 0 12 12"><path d="M0 0h12v12H0z" fill="#46a55b" /><path d="M0 12L8 3l4 5v4z" fill="#e9edf0" /><path d="M4 12l5-6 3 4v2z" fill="#4d84e0" /><path d="M9 0a2 2 0 0 1 2 2q0 1.500-2 4-2-2.500-2-4a2 2 0 0 1 2-2z" fill="#c9302c" /></svg>;

const C = "#1273a8", O = "#ee8a28", G = "#8a939c";
const big: Record<string, React.ReactNode> = {
  scroll: <><path d="M8 2h17q-3 0-3 5v16q0 5-3 5H5q-3 0-3-5h15M8 2q-2 1-2 5v16M22 7h4q0-5-2-5" fill="#fafcfd" stroke="#8fa3b3" strokeWidth="1.200" /><path d="M9 4v5M9 4h2q2 1.300 0 2.500H9M11 6.500l3 4M14 7.500l-3 3" stroke="#4b5a68" fill="none" strokeWidth=".9" /><circle cx="20" cy="17" r="6.500" fill={C} /><path d="M20 13.800v6.400M16.800 17h6.400" stroke="#fff" strokeWidth="1.800" /></>,
  folder: <><path d="M2 4h9l2 3h13v14H2z" fill="#e9eef3" stroke={G} /><path d="M6 11h22l-4 14H2z" fill={O} /><circle cx="24" cy="22" r="5.500" fill="#d8edf8" stroke={C} strokeWidth="1.500" /><circle cx="24" cy="22" r="2" fill={C} /></>,
  edit: <><path d="M2 2h26v17l-8 9H2z" fill="#fbfcfd" stroke={G} /><path d="M20 28v-8h8" fill="#e6eaee" stroke={G} /><path d="M7 22l1.500-5L20 5l3.500 3.500L12 20z" fill={O} stroke="#3b4955" /><path d="M7 22l1.500-5 3.500 3z" fill="#3b4955" /></>,
  browse: <><circle cx="17" cy="12" r="10" fill="#dce9f2" stroke={G} /><circle cx="17" cy="12" r="7.500" fill={C} /><path d="M14.500 8v7M14.500 8h3q2 2 0 3.500h-3M16.500 11.500l4 5M20.500 12l-4 4" stroke="#fff" fill="none" /><path d="M10 18l3 3-6 7-3-2z" fill={O} stroke="#5c4a37" strokeWidth=".6" /></>,
  price: <><path d="M26 2v12L15 28 3 19 14 5z" fill="#fbfcfd" stroke={G} /><circle cx="22" cy="6" r="1.500" fill="none" stroke={G} /><circle cx="9.500" cy="17" r="2.300" stroke={C} strokeWidth="1.500" /><path d="M11.800 16q0 5-3.500 6M17 14v8M13 18h8" stroke={C} strokeWidth="1.500" fill="none" /></>,
  refill: <><path d="M5 3h18v5H5z" fill="#fbe3cb" stroke={O} /><path d="M4 8h20v20H4z" fill={O} /><path d="M4 13h15v12H4z" fill="#fbfcfd" stroke="#c8ccd0" /><circle cx="22" cy="9" r="6.500" fill={C} /><circle cx="22" cy="9" r="3" fill="none" stroke="#fff" strokeWidth="1.600" strokeDasharray="8 1.500" /></>,
  patient: <><path d="M9 9q0-8 6-8t6 8q0 7-6 7T9 9z" fill="#fbe2cf" stroke="#3b4955" strokeWidth=".7" /><path d="M8 8q0-8 7-8t7 8q-4-4-7-3T8 8z" fill="#1d3a52" /><path d="M3 29q0-11 8-12l4 3 4-3q8 1 8 12z" fill={O} stroke="#a35a14" strokeWidth=".6" /></>,
  prescriber: <><path d="M10 8q0-7 5-7t5 7q0 7-5 7t-5-7z" fill="#fbe9dc" stroke="#3b4955" strokeWidth=".7" /><path d="M9.500 7q0-7 5.500-7t5.500 7q-4-3-5.500-3T9.500 7z" fill="#1d3a52" /><path d="M4 29q0-12 8-13h6q8 1 8 13z" fill="#f1f5f8" stroke={G} /><path d="M12 16l3 2 3-2-2 3 0 5-1 2-1-2 0-5z" fill={O} /><path d="M10 17v6M20 17v5" stroke="#23506f" /></>,
  drug: <><circle cx="15" cy="15" r="13.500" fill="#d9ebfb" stroke="#8a9bb0" /><rect x="7" y="11" width="16" height="8" rx="4" fill="#fff" stroke="#7d8fa0" /><path d="M15 11h4a4 4 0 0 1 0 8h-4z" fill={O} /></>,
  shield: <><path d="M15 1q5 3 11 2 1 17-11 26Q3 20 4 3q6 1 11-2z" fill={C} stroke="#125a84" /><circle cx="15" cy="13.500" r="6.500" fill="#fff" /><path d="M15 9.500v8M11 13.500h8" stroke={O} strokeWidth="3" /></>,
  tasks: <><path d="M2 1h25v19l-8 9H2z" fill="#fbfcfd" stroke={G} /><path d="M19 29v-8h8" fill="#dfe5ea" stroke={G} />{[5, 13, 21].map(y => <g key={y}><path d={`M5 ${y - 2}h5v5H5z`} fill="#dcebf4" stroke="#3c5468" /><path d={`M6.500 ${y}l1.500 2 3-4`} stroke={C} fill="none" strokeWidth="1.400" /><path d={`M13 ${y - 1}h11M13 ${y + 2}h${y > 20 ? 4 : 8}`} stroke={G} /></g>)}</>,
  find: <><path d="M18 18l4-2 7 9-4 3z" fill={O} stroke="#5c4a37" /><circle cx="11" cy="11" r="10" fill="#f2f8fc" stroke={G} /><circle cx="11" cy="11" r="7.500" fill={C} /><path d="M7.500 11l2.500 3 4.500-6" stroke="#fff" strokeWidth="2.200" fill="none" /></>,
};
const Big = ({ n }: { n: string }) => <svg width="30" height="30" viewBox="0 0 30 30" fill="none">{big[n]}</svg>;

const menus = ["R&x", "&Maintenance", "Rep&orts", "&House Charges", "&Inventory", "&Claims Processing", "&Nursing Home", "MTM", "Elec.&Sign.", "&E-Rx", "&Fax", "SMS/PhoneCalls", "&DMS", "Delivery", "&Tools", "&Windows", "&Help"];
const tools: [string, string, number][] = [
  ["Enter Rx(F5)", "scroll", 75], ["Enter Rx2 (^F5)", "scroll", 90], ["History(F6)", "folder", 67], ["Edit Rx(F7)", "edit", 66],
  ["Browse Rx(F8)", "browse", 83], ["Price Rx(^C)", "price", 74], ["Refill(^R)", "refill", 59], ["Patient(F9)", "patient", 66],
  ["Prescriber(F11)", "prescriber", 84], ["Drug(F10)", "drug", 61], ["Insurance(F12)", "shield", 84], ["Tasks(0)", "tasks", 52],
];
const flows = [
  { t: "Intake", bg: "#006400", c: "#1d5f1d", rows: [["ERx", 0], ["Doc Queue", 0], ["Refill Queue", 160], ["Incoming Fax", 0], ["Filed", 4]] },
  { t: "Billing", bg: "#0000ff", c: "#1c1cdc", rows: [["Unbilled", 28], ["DUR", 0], ["PA", 0], ["Not Covered", 0], ["Unbilled RXV Done", 0]] },
  { t: "Verification", bg: "#ff8c00", c: "#f08a14", rows: [["Rx Verif", 0], ["Drug Pick Verif", 28], ["RPH Verif", 28]] },
  { t: "Pickup", bg: "#068b86", c: "#158a86", rows: [["Rx(s) Ready", 28], ["Rx Bin", 0], ["Delivery Bin", 0], ["In Transit", 14], ["Unpicked Rxs Over 14 Days", 287]] },
];
const rx = [
  { n: "75962-R", a: 5, r: 1, i: "EMB", t: "", o: "3", bg: "#fff", no: "#90ee90", rxc: "#90ee90", flag: "#ff0000" },
  { n: "75964", a: 0, r: 0, i: "MCD", t: "P", o: "1", bg: "#ffff00", no: "#fffac0", rxc: "", flag: "#ffff00", tag: true },
  { n: "75962", a: 5, r: 0, i: "EMB", t: "P", o: "3", bg: "#fff", no: "#fffac0", rxc: "", flag: "#ff0000" },
  { n: "75961", a: 0, r: 0, i: "EMB", t: "P", o: "1", bg: "#dffdff", no: "#fffac0", rxc: "", flag: "#ff0000", note: true },
];
const rep: string[][] = [
  ["", "", "", "", "", "", "", "", "Billed"], ["", "", "", "", "", "", "", "", "Filled"],
  ["", "", "", "", "", "", "", "9/9/25 NEED UP", "UnBilled"], ["", "", "", "", "", "", "", "", "Filled"],
  ["", "", "", "", "", "", "", "", "Billed"], ["", "", "", "", "", "", "", "", "Filled"],
  ["", "", "", "", "", "", "", "09/02/225-GET C", "UnBilled"], ["", "", "", "", "", "", "", "NOTES", "Filled"],
  ["9", "09/08/2025", "76239", "5", "0", "HALL. ISILDA", "03/04/1958", "NOTES", "UnBilled"],
  ["10", "09/08/2025", "76238", "0", "0", "GUEVARA. EPIFA", "04/07/1943", "94001501057960", "Billed"],
  ["11", "09/08/2025", "76237", "0", "0", "PIETSCH. TINA", "08/18/1973", "", "UnBilled"],
  ["12", "09/08/2025", "76236", "5", "0", "GUEVARA. EPIFA", "04/07/1943", "94001501057960", "Billed"],
  ["13", "09/08/2025", "76235", "12", "0", "KIM. PHIL", "01/06/1954", "", "UnBilled"],
  ["", "", "", "", "", "", "", "", ""],
];

function RxGrid() {
  const cols = [17, 106, 34, 35, 83, 0, 42, 20, 69, 31, 33, 47, 49, 19, 20, 37];
  return (
    <RxTable>
      <colgroup>{cols.map((w, i) => <col key={i} style={w ? { width: w } : undefined} />)}</colgroup>
      <thead>
        <tr>
          <th colSpan={2}>RX#</th><th>Auth</th><th>Rf#</th><th>Ins</th><th /><th className="lp">LP</th><th><NoteIco /></th><th>RxDoc</th>
          <th><ClipIco />T</th><th><ClipPhone />O</th><th>DVrf?</th><th>PVrf?</th><th><PcIco /></th><th>De</th><th>Tag</th>
        </tr>
      </thead>
      <tbody>
        {rx.map((r, i) => (
          <RxRow key={i} $bg={r.bg} $no={r.no} $rx={r.rxc} $flag={r.flag}>
            <td className="no">{i + 1}</td><td className="rx">{r.n}</td><td>{r.a}</td><td>{r.r}</td><td>{r.i}</td><td className="mid" /><td />
            <td className="ico">{r.note && <NoteIco />}</td><td>Yes</td>
            <td className="ico">{r.t && <><ClipIco />{r.t}</>}</td>
            <td>{r.o === "3" && <DocGlobe />}{r.o}</td><td /><td className="pv">N</td><td /><td />
            <td className="tag"><input type="checkbox" defaultChecked={!!r.tag} aria-label={`Tag ${r.n}`} /></td>
          </RxRow>
        ))}
      </tbody>
    </RxTable>
  );
}

function SaveAs() {
  return (
    <SaveDlg aria-label="Save As">
      <DlgTitle>Save As<Spacer /><IconBtn aria-label="Close dialog"><Cross s={9} /></IconBtn></DlgTitle>
      <NavRow>
        <NavIcons>
          <svg width="11" height="10" viewBox="0 0 11 10" {...line}><path d="M11 5H1M5 1L1 5l4 4" /></svg>
          <svg width="11" height="10" viewBox="0 0 11 10" {...line}><path d="M0 5h10M6 1l4 4-4 4" /></svg>
          <Chev /><svg width="11" height="11" viewBox="0 0 11 11" {...line} strokeWidth={1.3}><path d="M5.500 11V1M1 5.500L5.500 1 10 5.500" /></svg>
        </NavIcons>
        <Address>
          <DownIco /><Chev d="right" s={8} />Downloads<Spacer /><Chev />
          <Reload width="12" height="12" viewBox="0 0 12 12" {...line}><path d="M10.500 4A5 5 0 1 0 11 6M11 1v3H8" /></Reload>
        </Address>
        <SearchBox>
          <input placeholder="Search Downloads" aria-label="Search Downloads" />
          <svg width="11" height="11" viewBox="0 0 11 11" {...line} strokeWidth={1.4}><circle cx="6.700" cy="4" r="3" /><path d="M4.500 6.200L.5 10" /></svg>
        </SearchBox>
      </NavRow>
      <DlgTools>
        <button>Organize <Caret c="#34435a" /></button><button>New folder</button><Spacer />
        <button aria-label="View"><svg width="11" height="9" viewBox="0 0 11 9" stroke="#333"><path d="M0 .5h11M0 3h11M0 5.500h11M0 8h11" /></svg><Caret c="#34435a" /></button>
        <button aria-label="Help"><svg width="15" height="15" viewBox="0 0 15 15"><circle cx="7.500" cy="7.500" r="7.500" fill="#1078d0" /><path d="M5.500 5.500q0-2 2-2t2 2q0 1-2 2v1.500M7.500 10.500v1.500" stroke="#fff" strokeWidth="1.300" fill="none" /></svg></button>
      </DlgTools>
      <DlgBody>
        <Places>
          <Place><i /><svg width="15" height="14" viewBox="0 0 15 14"><path d="M2.500 6v7.500H6V9h3v4.500h3.500V6l-5-4z" fill="#c9c9c9" /><path d="M.5 7.500l7-6.500 7 6.500" stroke="#e8833a" strokeWidth="2" fill="none" /></svg>Home</Place>
          <Place><i /><svg width="15" height="14" viewBox="0 0 15 14"><path d="M3 2h12v12H3z" fill="#7cc0ee" /><path d="M0 0h13v12H0z" fill="#1a78cc" /><path d="M1 12l5.500-6 5.500 6z" fill="#fff" /><circle cx="9.500" cy="3.500" r="1.200" fill="#fff" /></svg>Gallery</Place>
          <Place $on><Chev d="right" /><svg width="12" height="14" viewBox="0 0 12 14"><path d="M.5.5h7.500l3.500 3.500v9.500H.5z" fill="#fff" stroke="#999" /></svg>OneDrive</Place>
          <hr />
          <Place><i /><svg width="15" height="11" viewBox="0 0 15 11"><rect width="15" height="11" rx="1" fill="#1c9bd8" /><path d="M0 8h15v3H0z" fill="#0f6a9c" /><path d="M2 2h2M2 4h2" stroke="#d4f1ff" /></svg>Desktop<Pin /></Place>
          <Place><i /><DownIco />Downloads<Pin /></Place>
        </Places>
        <VScroll><Thumb $h={46} /></VScroll>
        <FileArea>
          <FileView>
            <FileTable>
              <colgroup><col style={{ width: 271 }} /><col style={{ width: 131 }} /><col /></colgroup>
              <thead><tr><th>Name</th><th>Date modified</th><th>Type</th></tr></thead>
              <tbody>
                {[["Today", "09.08.2025", "9/9/2025 2:16 AM"], ["Yesterday", "09.07.2025", "9/8/2025 3:06 AM"], ["Earlier this week", "09.05.2025", "9/7/2025 10:21 PM"]].map(g => (
                  <React.Fragment key={g[0]}>
                    <tr><td className="group" colSpan={3}><span><Chev s={10} />{g[0]}</span></td></tr>
                    <tr><td><span><Excel />{g[1]}</span></td><td>{g[2]}</td><td>Microsoft Exce</td></tr>
                  </React.Fragment>
                ))}
              </tbody>
            </FileTable>
            <VScroll><Thumb $h={16} /></VScroll>
          </FileView>
          <FileHScroll><Bar $w={359} /></FileHScroll>
        </FileArea>
      </DlgBody>
      <DlgForm>
        <label htmlFor="fname"><Mn t="File &name:" /></label>
        <NameWrap><input id="fname" defaultValue="09.08.2025" /><TextCaret /><Chev /><Suggest><div>09.08.2025.csv</div><GripDots /></Suggest></NameWrap>
        <label htmlFor="ftype"><Mn t="Save as &type:" /></label>
        <TypeSelect><select id="ftype"><option /></select><Chev /></TypeSelect>
      </DlgForm>
      <DlgFoot>
        <button><Chev d="up" />Hide Folders</button>
        <Rounded $w={78} $h={22} $edge="#3c8fd0" $bg="#e3f0f9"><Mn t="&Save" /></Rounded>
        <Rounded $w={78} $h={22}>Cancel</Rounded>
      </DlgFoot>
      <GripDots />
    </SaveDlg>
  );
}

function ReportsWindow() {
  return (
    <Reports aria-label="Pharmacy Custom Reports">
      <WinTitle>Pharmacy Custom Reports<Spacer /><WinButtons $gap={32}><IconBtn aria-label="Minimize reports"><Min s={9} /></IconBtn><IconBtn aria-label="Maximize reports"><Square /></IconBtn><IconBtn aria-label="Close reports"><Cross s={9} /></IconBtn></WinButtons></WinTitle>
      <Banner><svg width="15" height="11" viewBox="0 0 15 11"><path d="M1 5q2-4 6-3l7 4v4l-6 .5-6-2z" fill="#ddd" stroke="#555" /><path d="M3 4l8 5M6 3l6 4" stroke="#777" /></svg></Banner>
      <Criteria>
        <ComboBox><select aria-label="Report"><option /></select>
          <svg width="15" height="16" viewBox="0 0 15 16" fill="#fff" stroke="#bbb"><path d="M.5.5h14v15H.5z" /><path d="M4 6.500l3.500 3.500L11 6.500" fill="none" stroke="#666" /></svg></ComboBox>
        <input aria-label="Criteria" />
        <Rounded $w={67} $h={28} $c="#1f2fa8"><Mn t="&Search" /></Rounded>
      </Criteria>
      <Sheet>
        <SheetView>
          <SheetTable>
            <colgroup>{[34, 87, 80, 161, 62, 103, 121, 99, 65].map((w, i) => <col key={i} style={{ width: w }} />)}</colgroup>
            <thead><tr><th /><th /><th /><th /><th /><th /><th /><th>RXNOTES</th><th>Status</th></tr></thead>
            <tbody>{rep.map((r, i) => <tr key={i}>{r.map((c, j) => <td key={j}>{c}</td>)}</tr>)}</tbody>
          </SheetTable>
        </SheetView>
        <SheetScroll><Thumb $h={13} /></SheetScroll>
      </Sheet>
      <HScroll><Bar $w={443} /></HScroll>
      <RepFoot>
        <div><label><Tick type="checkbox" />Enable Cell Padding</label><p>Total Records: 152</p></div>
        <Rounded $w={66} $h={28} $edge="#2676b8">Export</Rounded>
        <Rounded $w={66} $h={28} $c="#c8281e"><Mn t="&Close" /></Rounded>
      </RepFoot>
      <GripDots />
      <SaveAs />
    </Reports>
  );
}

export default function App() {
  return (
    <Viewer>
      <Global />
      <ViewerTitle>
        <svg width="17" height="17" viewBox="0 0 17 17"><rect width="17" height="17" rx="2" fill="#263c4c" /><path d="M3 4h8v6H3z" fill="#fff" /><path d="M6 7h8v6H6z" fill="#0b8a1c" stroke="#cfe8d2" strokeWidth=".6" /></svg>
        VM7 Connected fps:7<Spacer />
        <WinButtons $gap={35}><IconBtn aria-label="Minimize viewer"><Min /></IconBtn><IconBtn aria-label="Restore viewer"><Restore /></IconBtn><IconBtn aria-label="Close viewer"><Cross /></IconBtn></WinButtons>
      </ViewerTitle>
      <ViewerBar>
        <BarSide>VM7 <Monitor /></BarSide>
        <BarTools>
          <IconBtn aria-label="Actions"><FaBolt size={17} /></IconBtn>
          <IconBtn aria-label="Draw"><svg width="18" height="16" viewBox="0 0 18 16" fill="none" stroke="#fff" strokeWidth="1.800"><path d="M9 4H1v10.500h14V9" /><path d="M8 10.500l1-3L15.500 1l2 2L11 9.500z" fill="#fff" strokeWidth=".5" /><path d="M3.500 11h2M7 12h4" strokeWidth="1.400" /></svg></IconBtn>
          <IconBtn aria-label="Keyboard"><svg width="18" height="13" viewBox="0 0 18 13" fill="none" stroke="#fff"><rect x="1" y="1" width="16" height="11" rx="1" strokeWidth="2" /><path d="M3.500 4h11M3.500 6.500h11" strokeWidth="1.500" strokeDasharray="1.600 .8" /><path d="M4 9.300h1.600M6.500 9.300h5M12.400 9.300H14" strokeWidth="1.500" /></svg></IconBtn>
          <IconBtn aria-label="Clipboard"><svg width="14" height="18" viewBox="0 0 14 18" fill="#fff"><path d="M1 3h3q0-3 3-3t3 3h3q1 0 1 1v13q0 1-1 1H1q-1 0-1-1V4q0-1 1-1z" /><path d="M4 5.500h6" stroke="#252532" /></svg></IconBtn>
          <IconBtn aria-label="Print remote"><FaPrint size={18} /></IconBtn><IconBtn aria-label="Files"><FaFolder size={18} /></IconBtn>
          <IconBtn aria-label="Chat"><FaComment size={18} /></IconBtn><IconBtn aria-label="Settings"><FaCog size={17} /></IconBtn><IconBtn aria-label="Power"><FaPowerOff size={17} /></IconBtn>
        </BarTools>
        <BarSide $end><IconBtn aria-label="Full screen"><FaExpandArrowsAlt size={17} /></IconBtn></BarSide>
      </ViewerBar>
      <Stage>
        <Desktop>
          <AppTitle><RxLogo />201 CUREMED RX<Spacer /><WinButtons $gap={32}><IconBtn aria-label="Minimize"><Min s={9} /></IconBtn><IconBtn aria-label="Restore"><Restore s={9} /></IconBtn><IconBtn aria-label="Close"><Cross s={10} /></IconBtn></WinButtons></AppTitle>
          <MenuBar><Logo>R</Logo>{menus.map(m => <a key={m} href="#menu"><Mn t={m} /></a>)}<Spacer /><IconBtn aria-label="Close child"><Cross s={7} w={3} /></IconBtn></MenuBar>
          <ToolBar>
            {tools.map(([t, i, w]) => <BigTool key={t} $w={w}><Big n={i} />{t}</BigTool>)}
            <Finder><Big n="find" /><input aria-label="Find" /></Finder>
            <BigTool $w={37}>Refill</BigTool><BigTool $w={35}>Edit</BigTool><BigTool $w={40}>Label</BigTool>
          </ToolBar>
          <Work>
            <Flow>
              <FlowHead>Live Workflow<svg width="7" height="10" viewBox="0 0 7 10" {...line}><path d="M1.500.5h4v5h-4zM0 5.500h7M3.500 5.500V10M4.500.5v5" /></svg></FlowHead>
              <FromRow>From: 9/9/2025&nbsp;<SmallTool aria-label="Reload"><Swirl /></SmallTool><SmallTool aria-label="Options"><GearIco /></SmallTool></FromRow>
              {flows.map(f => (
                <React.Fragment key={f.t}>
                  <FlowTitle $c={f.bg}>{f.t}</FlowTitle>
                  <FlowList>{f.rows.map(([n, v]) => <FlowRow key={n} $c={f.c}><span>{n}</span><b>{v}</b></FlowRow>)}</FlowList>
                </React.Fragment>
              ))}
            </Flow>
            <Splitter />
            <Doc>
              <DocTabs><DocTab $on>Rx Entry 1</DocTab><DocTab>Browse Rx</DocTab><Spacer /><IconBtn aria-label="Close tab"><svg width="7" height="18" viewBox="0 0 7 18" stroke="#222" strokeWidth="1.800"><path d="M.5 5l6 6M6.500 5l-6 6" /></svg></IconBtn></DocTabs>
              <DocBody>
                <Center>
                  <GroupHead>
                    <h2>Patient</h2><Spacer /><Alert>SMS/Call Subscribed&nbsp;</Alert><HeadsetNote />
                    <HeadBtn $w={57} $ml={5} $dark>Ext.Profile</HeadBtn><HeadBtn $w={18} $ml={86} aria-label="Map"><MapIco /></HeadBtn>
                    <HeadBtn $w={66} $ml={67}>Rx Sync</HeadBtn><HeadBtn $w={12} aria-label="Rx Sync menu"><Caret c="#11207a" /></HeadBtn><HeadBtn $w={53} $dark>Notes</HeadBtn>
                  </GroupHead>
                  <GroupBody>
                    <Fields>
                      <label className="short" htmlFor="pn">Name</label><Drop aria-label="Patient list"><ArrowDown /></Drop><Field id="pn" $bg="#fbdcae" defaultValue="VIOLANTE, BRIANNA" />
                      <label htmlFor="ins">Insurance Id#</label><Field id="ins" $bg="#ffffee" defaultValue="K9051060404" />
                      <label htmlFor="ph">Phone Number</label><Field id="ph" $bg="#ffffee" defaultValue="(917)748-3092________________" />
                    </Fields>
                    <LookBtn aria-label="Look up"><svg width="14" height="14" viewBox="0 0 14 14" fill="#fff" stroke="#777" strokeWidth="1.500"><circle cx="7" cy="6" r="4.500" /></svg></LookBtn>
                    <Info>
                      <dl>
                        <div><dt>DOB:</dt><dd>1/28/1998</dd></div><div><dt>Age:</dt><dd>27yrs, 7m</dd></div><div><dt>Sex:</dt><dd>{"      F"}</dd></div>
                        <div><dt>Address:</dt><dd>{" 229 MAYBERRY PROMENADE  STATEN ISLAND NY 10312"}</dd></div>
                      </dl>
                    </Info>
                    <InfoScroll><Thumb $h={22} /></InfoScroll>
                  </GroupBody>
                  <GroupHead $blue><h2>Prescriber</h2></GroupHead>
                  <GroupBody $red>
                    <Fields>
                      <label className="short" htmlFor="dn">Name</label><Drop aria-label="Prescriber list"><ArrowDown /></Drop><Field id="dn" $bg="#fff8c4" defaultValue="DANZIG,MATTHEW" />
                      <label htmlFor="dp">Phone Number</label><Field id="dp" $bg="#fff" defaultValue="(___)___-____" />
                    </Fields>
                    <F4>F4=Patient Doctor List</F4>
                  </GroupBody>
                  <NotesBar>Notes for VIOLANTE, BRIANNA</NotesBar>
                  <NotesBox>
                    <textarea aria-label="Notes" defaultValue={"9/8/25 PT CONFIRMED ADDRESS, PLEASE \n9/8/25 CALLED AND LM TO CONFIRM ADDR\n8/29/25 SENT TO MCD FOR PA"} />
                    <NotesScroll><Caret up c="#999" /><Caret c="#999" /></NotesScroll>
                    <NotesButtons><button>Save</button><button>Cancel</button></NotesButtons>
                  </NotesBox>
                  <GridTabs><GridTab $on>Rx History (Alt+H or F3 to Activate)</GridTab><GridTab>ERXAction</GridTab><Spacer /><svg width="15" height="22" viewBox="0 0 15 22"><path d="M0 12.500h15M4 9.500h7" stroke="#222" /><path d="M4 12h7l-3.500 4z" fill="#111" /></svg></GridTabs>
                  <GridBox>
                    <GridArea><RxGrid /></GridArea>
                    <Actions>
                      <Act $w={57}><Mn t="&Change" /></Act><Act $w={12} aria-label="Change menu"><Caret /></Act>
                      <Act $w={54}><svg width="15" height="14" viewBox="0 0 15 14"><path d="M1 1l13 12M13 1L2 13" stroke="#d8392c" strokeWidth="2.600" /></svg><Mn t="&Delete" /></Act>
                      <Act $w={56}><span><Mn t="&Show" />{"\nRefs"}</span></Act><Act $w={54}>{"Expired\nRefills"}</Act>
                      <Act $w={52}><svg width="16" height="14" viewBox="0 0 16 14"><path d="M4 5l2-4h7l-2 4z" fill="#fff" stroke="#222" /><path d="M1 6l3-1h9l2 1v4l-3 3H1z" fill="#888" stroke="#111" /><path d="M3 9h8" stroke="#fff" /></svg><Mn t="&Print" /></Act>
                      <Act $w={52}><svg width="9" height="14" viewBox="0 0 9 14"><path d="M1 0h7v4H1z" fill="#2d3b4d" /><path d="M2 4h5v3l2 2v5H0V9l2-2z" fill="#b5d3ea" /><path d="M1 9.500h7" stroke="#e88" /></svg><Mn t="&Label" /></Act>
                      <Act $w={57}>{"Refill\nRequest"}</Act><Act $w={12} aria-label="Refill request menu"><Caret /></Act>
                      <Act $w={59} $off><svg width="16" height="14" viewBox="0 0 16 14" fill="none" stroke="#8a8a8a"><path d="M1 10Q0 1 9 1M4 11q-1-7 6-7" /><path d="M9 7l5-1v5l-3 2-3-2z" fill="#bbb" /></svg><Mn t="&Transmit" /></Act>
                      <Act $w={50} $ml={1}><span>{"Create\n"}<Mn t="&New" /></span></Act><Act $w={51} $ml={1}><Swirl /><Mn t="&Refill" /></Act>
                      <Act $w={52}><span><Mn t="&Quick" />{"\nRefill"}</span></Act>
                      <Act $w={61} $ml={229}>{"Manage\nCopay"}</Act>
                      <Act $w={61}><svg width="12" height="14" viewBox="0 0 12 14"><path d="M.5.5h8l3 3v10H.5z" fill="#fff" stroke="#777" /><path d="M3 6q3-4 6-1M9 8q-3 4-6 1" stroke="#1f8f3a" strokeWidth="2" fill="none" /></svg><Mn t="&Refresh" /></Act>
                    </Actions>
                    <Filters>
                      <Radios role="radiogroup" aria-label="Rx filter">
                        {["All", "Unbilled", "Billed", "Filed"].map((r, i) => <label key={r}><input type="radio" name="flt" defaultChecked={i === 0} />{r}</label>)}
                        <strong>There are 4 Total Rx(s)</strong>
                      </Radios>
                      <Spacer />
                      <Checks><label><Tick type="checkbox" />Current Rxs</label><label><Tick type="checkbox" />Maint. Only</label></Checks>
                      <DrugFilter>Filter By<div><label htmlFor="ndc"><Mn t="Dr&ug Name/NDC#" /></label><input id="ndc" /></div></DrugFilter>
                      <Legend><div><i style={{ background: "#008000" }} />Refill Due</div><div><i style={{ background: "#90ee90" }} />Not Due Yet</div><div><i style={{ background: "#f08080" }} />Ref. Expired</div></Legend>
                    </Filters>
                  </GridBox>
                </Center>
                <Rail>
                  <Pill htmlFor="rxn">Rx Number</Pill>
                  <RxNumber id="rxn" defaultValue="76248" />
                  <BillRow>
                    <Pill htmlFor="bt">Bill To</Pill>
                    <SmallTool aria-label="Edit bill to"><svg width="11" height="12" viewBox="0 0 11 12"><path d="M0 1h9v11H0z" fill="#9ec5dc" /><path d="M3 3h5v9H3z" fill="#fff" stroke="#333" strokeWidth=".6" /><path d="M11 0L6 7" stroke="#c22" strokeWidth="1.500" /></svg></SmallTool>
                  </BillRow>
                  <SelectBox $bg="#fbdfae" $h={20}><select id="bt"><option>EMB</option></select><CaretBlock h={18} bg="#fdf6e8" /></SelectBox>
                  <BillType htmlFor="btype">Bill Type</BillType>
                  <SelectBox $bg="#fff" $h={19} $small><select id="btype"><option>INS</option></select><CaretBlock h={17} bg="#f0f0f0" /></SelectBox>
                  <RailButtons>
                    <RailBtn><svg width="15" height="16" viewBox="0 0 15 16"><path d="M.5.5h7l3 3v11H.5z" fill="#f4f6f4" stroke="#999" /><path d="M10 7v8M6 11h8" stroke="#2a9d3f" strokeWidth="3" /></svg>New Rx</RailBtn>
                    <RailBtn $off><Swirl c="#999" />{"Refill Rx\n(Ctrl+R)"}</RailBtn>
                    <RailBtn><svg width="15" height="15" viewBox="0 0 15 15"><path d="M3 1h9v3h-1v7h1v3H3v-3h1V4H3z" fill="#d9a066" stroke="#9a642e" /></svg>{"History\n(Ctrl+H)"}</RailBtn>
                    <RailBtn><svg width="15" height="14" viewBox="0 0 15 14" fill="#eee" stroke="#888"><path d="M4 5V.5h7V5M1 5h13v6H1zM4 9h7v4.500H4z" /></svg>{"Quick Lbl\n(Ctrl+Q)"}</RailBtn>
                    <RailBtn><svg width="15" height="15" viewBox="0 0 15 15"><path d="M2 .5h9v13H2z" fill="#fff" stroke="#555" /><path d="M4 3h5" stroke="#c55" /><path d="M4 6h5M4 8h5M4 10h4" stroke="#555" /><path d="M7 11l3 3 4-6" stroke="#c82020" strokeWidth="2" fill="none" /></svg>{"Elig-Ch.\n(Ctrl-E)"}</RailBtn>
                  </RailButtons>
                </Rail>
              </DocBody>
              <HintBar><span>Search Prescriber By Last,First Name</span><span>New Rx</span><span>PH : AE</span><span /></HintBar>
            </Doc>
          </Work>
          <StatusBar>
            <Seg $w={82}>{"PrimeRx Ver\n6.1.4.2"}</Seg><Seg $w={74}>Station 201</Seg><Seg $w={127}>PH : AE</Seg><Seg $w={90}>9/9/2025</Seg>
            <Seg $w={54} $bg="#ff0000" $c="#8c1414" $edge="#7a5a5a">UnB: 112</Seg><Seg $w={54} $bg="#008000" $c="#fff" $edge="#4c7a4c">ERx: 14</Seg><Seg $w={54} $bg="#ffff00" $c="#333" $edge="#8a8a3c">Rfq:160</Seg>
            <Seg $w={54} $bg="#f08080" $c="#6c2060">InsEx:351</Seg><Seg $w={91} $bg="#f0f2f5" $c="#1d2c70"><RxLogo />Rx Entry 1</Seg>
            <Seg $w={90} $bg="#eef0f2" $c="#1d2c70" $edge="#eef0f2"><svg width="9" height="12" viewBox="0 0 9 12"><path d="M0 0h9v12H0z" fill="#fff" /><path d="M2 2v1M2 5v1M2 8v1" stroke="#999" /></svg>Browse Rx</Seg>
            <Seg as="div" $bg="none" />
            <Seg $w={30} $bg="#0f70b8" $c="#fff" aria-label="Cart"><FaShoppingCart size={20} /></Seg>
            <Seg $w={76} $bg="#ff7f0e" $c="#3c1c50" $edge="#b5651d"><svg width="12" height="12" viewBox="0 0 12 12"><circle cx="6" cy="6" r="6" fill="#2c8ee0" /><path d="M6 5v4.500M6 2.500V4" stroke="#fff" strokeWidth="1.600" /></svg>System Info</Seg>
          </StatusBar>
          <TaskBar>
            <TaskIcon aria-label="Start"><svg width="21" height="21" viewBox="0 0 21 21" fill="#1488d8"><path d="M0 0h10v10H0zM11 0h10v10H11zM0 11h10v10H0zM11 11h10v10H11z" /></svg></TaskIcon>
            <TaskIcon aria-label="Search"><svg width="20" height="20" viewBox="0 0 20 20" fill="none" stroke="#333" strokeWidth="2"><circle cx="8.500" cy="8.500" r="7.500" /><path d="M14 14l5.500 5.500" /></svg></TaskIcon>
            <TaskIcon aria-label="Copilot"><svg width="22" height="20" viewBox="0 0 22 20"><path d="M6 0h7q2 0 3 3l1 3h-5q-2 0-3 3l-2 6H3q-4 0-2-6l2-6q1-3 3-3z" fill="#2a86d8" /><path d="M16 20H9q-2 0-3-3l-1-3h5q2 0 3-3l2-6h4q4 0 2 6l-2 6q-1 3-3 3z" fill="#e0649a" /><path d="M5 14h5q2 0 3-3l1-3 3 6q-1 6-4 6H9q-2 0-3-3z" fill="#f0903c" /><path d="M1 9q1-3 4-3h4l-2 8q-1 1-4 1-4 0-2-6z" fill="#34b48c" /></svg></TaskIcon>
            <TaskIcon aria-label="Explorer"><svg width="23" height="19" viewBox="0 0 23 19"><path d="M0 0h8l3 3h12v16H0z" fill="#e9a82c" /><path d="M0 5h23v14H0z" fill="#fbd264" /><path d="M5 14q0-2 2-2h9q2 0 2 2v5H5z" fill="#1878c8" /></svg></TaskIcon>
            <TaskIcon aria-label="Edge"><svg width="23" height="22" viewBox="0 0 23 22"><circle cx="11.500" cy="10.500" r="10.500" fill="#1878c4" /><path d="M1 10Q2 0 12 0t10 10q0 4-6 4 2-6-4-7T1 10z" fill="#3bc29a" /><circle cx="13" cy="11" r="3.500" fill="#eef6fa" /><path d="M0 14h11v8H0z" fill="#d98130" /></svg><svg width="6" height="2"><rect width="6" height="2" rx="1" fill="#888" /></svg></TaskIcon>
            <TaskIcon aria-label="Snip"><svg width="20" height="20" viewBox="0 0 20 20" fill="none"><path d="M1 1h9v9H1z" stroke="#b03020" strokeWidth="2" strokeDasharray="2 1.500" /><path d="M10 4v12M5 11h12" stroke="#6a8290" strokeWidth="1.500" /><circle cx="18" cy="12" r="1.800" stroke="#2a9ad8" strokeWidth="1.500" /><circle cx="10" cy="18" r="1.800" stroke="#2a9ad8" strokeWidth="1.500" /></svg></TaskIcon>
            <TaskIcon $on aria-label="PrimeRx"><RxLogo s={21} /><svg width="14" height="3"><rect width="14" height="3" rx="1" fill="#1878c8" /></svg></TaskIcon>
            <Spacer />
            <Tray>
              <Chev d="up" s={10} />
              <svg width="16" height="13" viewBox="0 0 16 13" fill="#aaa" stroke="#333" strokeWidth="1.200"><path d="M4 11.500a3.500 3.500 0 0 1 0-7q1-3 4-3t4 3q3 0 3 3.500t-3 3.500zM2 0l12 13" /></svg>
              <div>
                <svg width="15" height="15" viewBox="0 0 15 15" fill="none" stroke="#333" strokeWidth="1.200"><path d="M10 1H1v10h12V7M5 14h6M11 1h3v4h-3zM12.500 5v3" /></svg>
                <svg width="14" height="13" viewBox="0 0 14 13" fill="none" stroke="#333"><path d="M1 4.500h2.500L7 1v4M1 4.500v4h2" /><circle cx="9.500" cy="8.500" r="4" fill="#222" /><path d="M8 7l3 3M11 7l-3 3" stroke="#fff" /></svg>
              </div>
              <time>{"2:23 AM\n9/9/2025"}</time>
            </Tray>
          </TaskBar>
          <ReportsWindow />
          <SideTab><button aria-label="Expand"><Chev d="right" s={10} /></button><svg width="13" height="12" viewBox="0 0 13 12"><path d="M0 0h8v6H0z" fill="#fff" /><path d="M5 4h7.500v5H5zM7 11h4" fill="#999" stroke="#fff" /></svg><span>AllTechMD</span></SideTab>
          <Watermark aria-hidden><strong>Activate Windows</strong>Go to Settings to activate Windows.</Watermark>
        </Desktop>
      </Stage>
    </Viewer>
  );
}
